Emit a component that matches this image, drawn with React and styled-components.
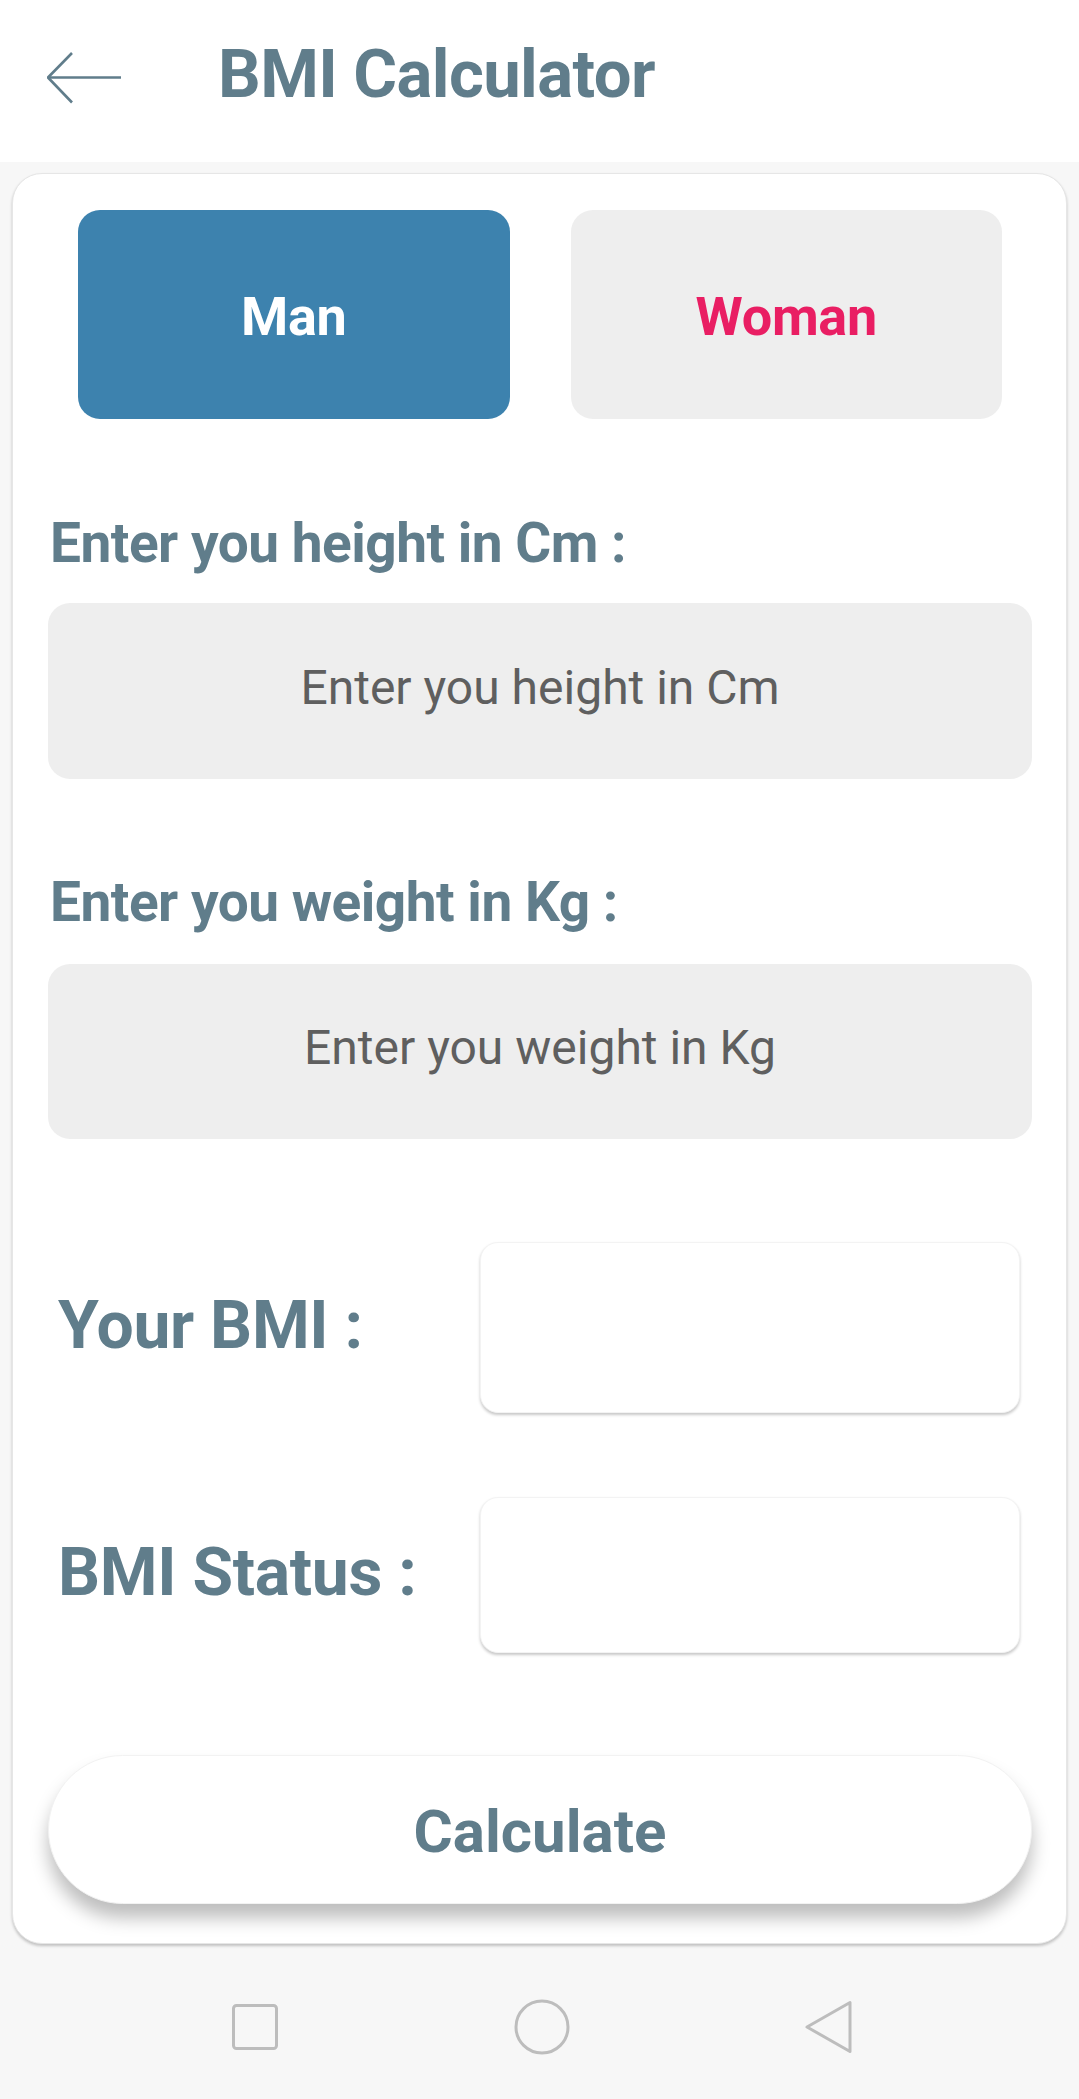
import React from "react";
import styled, { createGlobalStyle } from "styled-components";

const Global = createGlobalStyle`
  html, body { margin: 0; padding: 0; background: #f7f7f7; }
  body { font-family: Roboto, "Liberation Sans", sans-serif; }
  * { box-sizing: border-box; }
`;

const Screen = styled.div`
  width: 1079px;
  height: 2099px;
  display: flex;
  flex-direction: column;
  background: #f7f7f7;
  overflow: hidden;
`;

const Header = styled.header`
  height: 162px;
  flex: none;
  background: #ffffff;
  display: flex;
  align-items: center;
  padding: 0 0 6px 47px;
  gap: 97px;
`;

const BackButton = styled.button`
  border: 0;
  background: none;
  padding: 0;
  width: 74px;
  height: 52px;
  display: flex;
  color: #607d8b;
`;

const Title = styled.h1`
  margin: 0 0 7px;
  font-size: 67px;
  line-height: 1;
  font-weight: 700;
  letter-spacing: -0.6px;
  color: #607d8b;
`;

const Card = styled.main`
  flex: none;
  margin: 11px 12px 0;
  height: 1771px;
  background: #ffffff;
  border: 1px solid #e6e6e6;
  border-radius: 30px;
  box-shadow: 0 2px 3px rgba(0, 0, 0, 0.22);
  padding: 36px 34px 0 35px;
  display: flex;
  flex-direction: column;
`;

const GenderRow = styled.div`
  display: grid;
  grid-template-columns: 1fr 1fr;
  gap: 61px;
  padding: 0 30px;
`;

const GenderButton = styled.button`
  height: 209px;
  border: 0;
  border-radius: 22px;
  background: ${(p) => (p.$active ? "#3d82ae" : "#eeeeee")};
  color: ${(p) => p.$color};
  font-family: Roboto, "Liberation Sans", sans-serif;
  font-size: 54px;
  font-weight: 700;
  letter-spacing: -0.3px;
  padding: 4px 0 0;
`;

const FieldLabel = styled.label`
  display: block;
  margin-top: ${(p) => p.$top}px;
  font-size: 55px;
  line-height: 1;
  font-weight: 700;
  letter-spacing: -0.5px;
  color: #607d8b;
  padding-left: 2px;
`;

const TextInput = styled.input`
  display: block;
  margin-top: ${(p) => p.$top}px;
  width: 100%;
  height: ${(p) => p.$h}px;
  border: 0;
  border-radius: 22px;
  background: #eeeeee;
  text-align: center;
  font-family: Roboto, "Liberation Sans", sans-serif;
  font-size: 48px;
  color: #333;
  outline: none;
  padding: 0 0 8px;
  &::placeholder { color: #5f5f5f; }
`;

const ResultRow = styled.div`
  margin-top: ${(p) => p.$top}px;
  display: flex;
  align-items: center;
  justify-content: space-between;
  padding: 0 12px 0 10px;
`;

const ResultLabel = styled.span`
  font-size: 66px;
  line-height: 1;
  font-weight: 700;
  letter-spacing: -0.3px;
  color: #607d8b;
  padding: 0 0 4px;
`;

const ResultBox = styled.div`
  width: 540px;
  height: ${(p) => p.$h}px;
  background: #ffffff;
  border: 1px solid #f3f3f3;
  border-radius: 18px;
  box-shadow: 0 2px 3px rgba(0, 0, 0, 0.22);
`;

const CalcButton = styled.button`
  margin-top: 102px;
  height: 149px;
  width: 100%;
  border: 1px solid #f2f2f2;
  border-radius: 75px;
  background: #ffffff;
  box-shadow: 0 14px 18px rgba(0, 0, 0, 0.26);
  font-family: Roboto, "Liberation Sans", sans-serif;
  font-size: 60px;
  font-weight: 700;
  color: #607d8b;
  padding: 4px 0 0;
`;

const NavBar = styled.nav`
  flex: 1;
  display: flex;
  align-items: center;
  justify-content: center;
  padding: 10px 0 0 4px;
`;

const NavSlot = styled.div`
  width: 287px;
  display: flex;
  justify-content: center;
  color: #bdbdbd;
`;

export default function App() {
  return (
    <>
      <Global />
      <Screen>
        <Header>
          <BackButton aria-label="back">
            <svg width="74" height="52" viewBox="0 0 74 52" fill="none">
              <path d="M74 25.5H1.5" stroke="currentColor" strokeWidth="2.6" />
              <path d="M25 1 L1 25.5 L25 50.5" stroke="currentColor" strokeWidth="2.6" strokeLinejoin="round" />
            </svg>
          </BackButton>
          <Title>BMI Calculator</Title>
        </Header>
        <Card>
          <GenderRow>
            <GenderButton $active $color="#ffffff">Man</GenderButton>
            <GenderButton $color="#e91e63">Woman</GenderButton>
          </GenderRow>
          <FieldLabel $top={97}>Enter you height in Cm :</FieldLabel>
          <TextInput $top={32} $h={176} placeholder="Enter you height in Cm" />
          <FieldLabel $top={96}>Enter you weight in Kg :</FieldLabel>
          <TextInput $top={34} $h={175} placeholder="Enter you weight in Kg" />
          <ResultRow $top={103}>
            <ResultLabel>Your BMI :</ResultLabel>
            <ResultBox $h={171} />
          </ResultRow>
          <ResultRow $top={84}>
            <ResultLabel>BMI Status :</ResultLabel>
            <ResultBox $h={156} />
          </ResultRow>
          <CalcButton>Calculate</CalcButton>
        </Card>
        <NavBar>
          <NavSlot>
            <svg width="46" height="46" viewBox="0 0 46 46" fill="none">
              <rect x="1.5" y="1.5" width="43" height="43" rx="3" stroke="currentColor" strokeWidth="3" />
            </svg>
          </NavSlot>
          <NavSlot>
            <svg width="56" height="56" viewBox="0 0 56 56" fill="none">
              <circle cx="28" cy="28" r="26" stroke="currentColor" strokeWidth="3" />
            </svg>
          </NavSlot>
          <NavSlot>
            <svg width="50" height="56" viewBox="0 0 50 56" fill="none">
              <path d="M46 3.5 L46 52.5 L3 28 Z" stroke="currentColor" strokeWidth="3" strokeLinejoin="round" />
            </svg>
          </NavSlot>
        </NavBar>
      </Screen>
    </>
  );
}
